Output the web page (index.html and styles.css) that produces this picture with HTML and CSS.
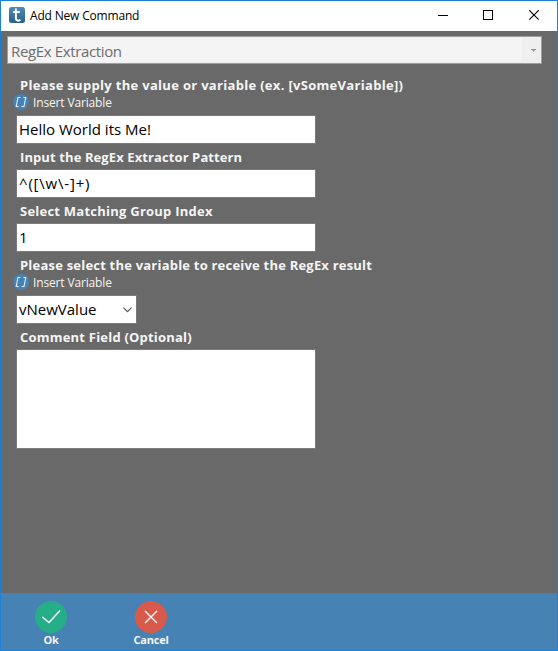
FILE: index.html
```html
<!DOCTYPE html>
<html lang="en">
<head>
<meta charset="utf-8">
<title>Add New Command</title>
<link rel="stylesheet" href="styles.css">
</head>
<body>
<div class="window">
  <header class="titlebar">
    <svg class="app-icon" width="16" height="16" viewBox="0 0 16 16">
      <defs><linearGradient id="tile" x1="0" y1="0" x2="0" y2="1"><stop offset="0" stop-color="#5289b5"/><stop offset="1" stop-color="#2a608c"/></linearGradient></defs>
      <rect width="16" height="16" rx="2.5" fill="url(#tile)"/>
      <path d="M6.9 1.6V10.8Q6.9 13.7 9.2 13.7Q10.5 13.7 11.4 12.6M4.2 5H10.8" fill="none" stroke="#fff" stroke-width="1.9"/>
    </svg>
    <h1 class="title">Add New Command</h1>
    <svg class="controls" width="102" height="12" viewBox="0 0 102 12" fill="none" stroke="#000" shape-rendering="crispEdges">
      <path d="M0 5.5H10"/><rect x="45.5" y=".5" width="9" height="9"/>
      <path d="M91.3 .3L100.7 9.7M100.7 .3L91.3 9.7" shape-rendering="auto" stroke-width="1.1"/>
    </svg>
  </header>
  <main class="content">
    <div class="command-select"><span class="command-name">RegEx Extraction</span><span class="command-arrow"><svg width="5" height="3" viewBox="0 0 5 3"><path d="M0 0H5V1H4L2.5 3L1 1H0Z" fill="#969696"/></svg></span></div>
    <div class="form">
      <div class="label label-linked label-value">Please supply the value or variable (ex. [vSomeVariable])</div>
      <div class="insert"><svg width="16" height="16" viewBox="0 0 16 16"><circle cx="8" cy="8" r="8" fill="#4682b4"/><path d="M7.4 3.5H5L3.2 12.5H5.6M10.4 3.5H12.8L11 12.5H8.6" fill="none" stroke="#e4eef6" stroke-width="1.1"/></svg><span>Insert Variable</span></div>
      <div class="field">Hello World its Me!</div>
      <div class="label label-pattern">Input the RegEx Extractor Pattern</div>
      <div class="field pattern">^([\w\-]+)</div>
      <div class="label label-index">Select Matching Group Index</div>
      <div class="field">1</div>
      <div class="label label-linked">Please select the variable to receive the RegEx result</div>
      <div class="insert"><svg width="16" height="16" viewBox="0 0 16 16"><circle cx="8" cy="8" r="8" fill="#4682b4"/><path d="M7.4 3.5H5L3.2 12.5H5.6M10.4 3.5H12.8L11 12.5H8.6" fill="none" stroke="#e4eef6" stroke-width="1.1"/></svg><span>Insert Variable</span></div>
      <div class="field dropdown"><span>vNewValue</span><svg width="9" height="6" viewBox="0 0 9 6"><path d="M.5 .7L4.5 4.7L8.5 .7" fill="none" stroke="#555" stroke-width="1.1"/></svg></div>
      <div class="label label-comment">Comment Field (Optional)</div>
      <div class="field comment"></div>
    </div>
  </main>
  <footer class="footer">
    <div class="action"><svg width="32" height="32" viewBox="0 0 32 32"><circle cx="16" cy="16" r="16" fill="#26ae88"/><path d="M7.3 16L14 21.5L25 9.5" fill="none" stroke="#fff" stroke-width="1.4"/></svg><span>Ok</span></div>
    <div class="action"><svg width="32" height="32" viewBox="0 0 32 32"><circle cx="16" cy="16" r="16" fill="#d75a4a"/><path d="M10 10L22 22M22 10L10 22" fill="none" stroke="#fff" stroke-width="1.4"/></svg><span>Cancel</span></div>
  </footer>
</div>
</body>
</html>
```
FILE: styles.css
```css
* { box-sizing: border-box; }
body { margin: 0; font-family: "Open Sans", "Noto Sans", sans-serif; }
svg { display: block; flex: none; }
.window { width: 558px; height: 651px; border: 1px solid #1b80d6; background: #696969; display: flex; flex-direction: column; overflow: hidden; white-space: nowrap; }
.titlebar { height: 30px; flex: none; display: flex; align-items: flex-start; background: #fff; padding: 6px 17px 0 8px; }
.title { margin: 0 0 0 5px; font-size: 12px; font-weight: 400; line-height: 18px; letter-spacing: -0.18px; color: #000; }
.controls { margin: 3px 0 0 auto; }
.content { flex: 1; padding: 5px 15px 0 6px; }
.command-select { width: 535px; height: 28px; border: 1px solid #a0a0a0; background: #efefef; display: flex; justify-content: space-between; color: #6d6d6d; font-size: 15px; line-height: 28px; }
.command-name { flex: 1; height: 24px; margin-top: 1px; line-height: 26px; padding-left: 3px; letter-spacing: -0.36px; background: #f4f4f4; }
.command-arrow { width: 19px; display: flex; align-items: center; justify-content: center; padding-left: 3px; }
.form { padding: 8px 0 0 9px; }
.label { height: 25px; padding-left: 4px; color: #f5f5f5; font-size: 13px; font-weight: 700; line-height: 27px; letter-spacing: 0.21px; }
.label-linked { height: 22px; }
.label-value { letter-spacing: 0.31px; }
.label-pattern { letter-spacing: 0.1px; }
.label-index { letter-spacing: 0.24px; }
.insert { height: 21px; margin-left: -3px; display: flex; gap: 4px; color: #f5f5f5; font-size: 12px; line-height: 17px; letter-spacing: -0.15px; }
.field { width: 300px; height: 29px; border: 1px solid #7a7a7a; background: #fff; padding-left: 2px; color: #000; font-size: 15px; line-height: 27px; }
.pattern { letter-spacing: 0.8px; }
.dropdown { width: 121px; display: flex; justify-content: space-between; align-items: center; padding-right: 4px; }
.comment { height: 100px; }
.footer { height: 57px; flex: none; background: #4682b4; display: flex; padding: 8px 0 0; }
.action { width: 100px; display: flex; flex-direction: column; align-items: center; color: #f5f5f5; font-size: 11px; font-weight: 700; line-height: 14px; letter-spacing: -0.2px; }
```
